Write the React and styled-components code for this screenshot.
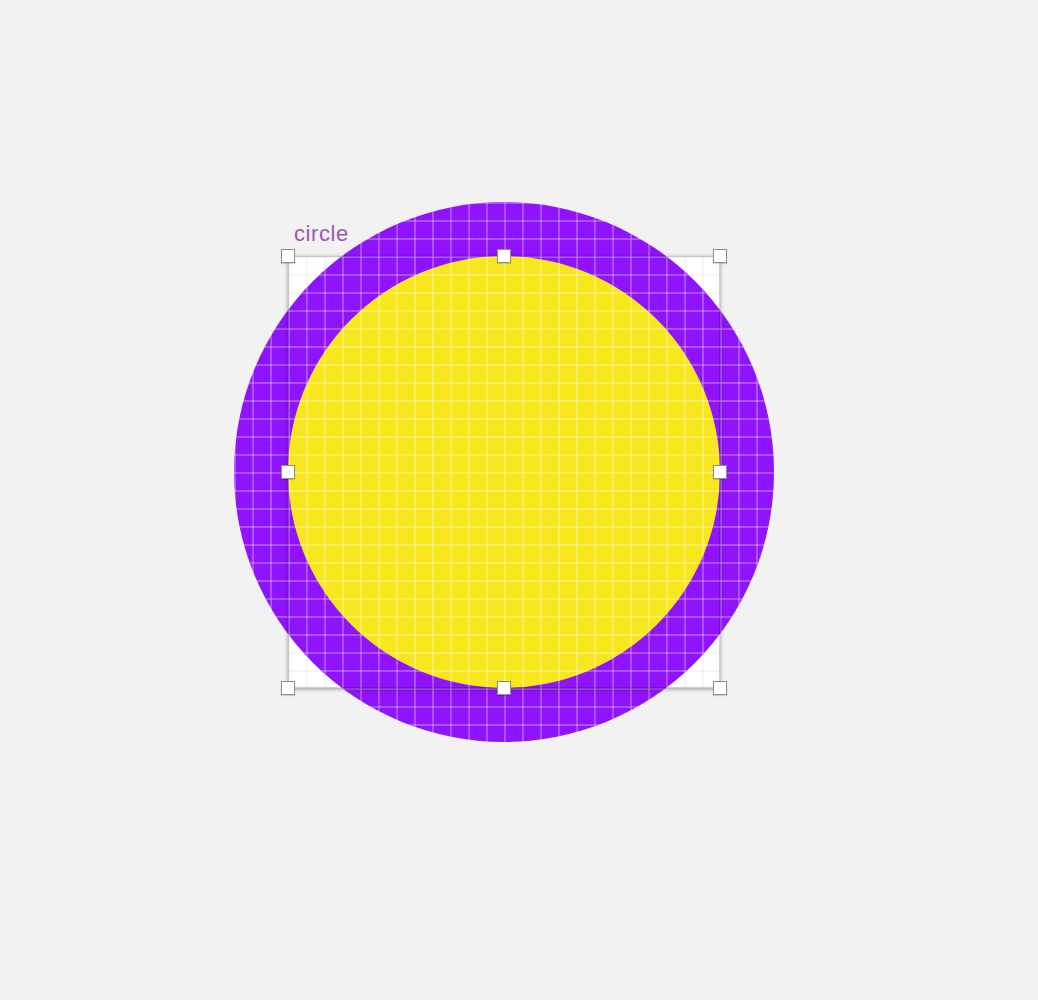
import React from "react";
import styled, { createGlobalStyle } from "styled-components";

const GlobalStyle = createGlobalStyle`
  html, body {
    margin: 0;
    padding: 0;
    background: #f2f2f2;
  }
  body {
    font-family: "Liberation Sans", Arial, sans-serif;
  }
`;

const gridLines = (color) => `
  linear-gradient(to right, ${color} 0, ${color} 2px, transparent 2px),
  linear-gradient(to bottom, ${color} 0, ${color} 2px, transparent 2px)
`;

const Canvas = styled.main`
  position: relative;
  width: 100%;
  height: 1000px;
  overflow: hidden;
  background: #f2f2f2;
`;

const Group = styled.div`
  position: absolute;
  left: 234px;
  top: 202px;
  width: 540px;
  height: 540px;
`;

const ElementBox = styled.div`
  position: absolute;
  left: 54px;
  top: 54px;
  width: 432px;
  height: 432px;
  background-color: #ffffff;
  background-image: ${gridLines("rgba(0,0,0,0.035)")};
  background-size: 18px 18px;
`;

const OuterRing = styled.div`
  position: absolute;
  left: 0;
  top: 0;
  width: 540px;
  height: 540px;
  border-radius: 50%;
  background-color: #9013fe;
  background-image: ${gridLines("rgba(255,255,255,0.26)")};
  background-size: 18px 18px;
`;

const InnerCircle = styled.div`
  position: absolute;
  left: 54px;
  top: 54px;
  width: 432px;
  height: 432px;
  border-radius: 50%;
  background-color: #f8e71c;
  background-image: ${gridLines("rgba(255,255,255,0.3)")};
  background-size: 18px 18px;
`;

const SelectionFrame = styled.div`
  position: absolute;
  left: 54px;
  top: 54px;
  width: 432px;
  height: 432px;
  box-sizing: border-box;
  border: 1px solid rgba(0, 0, 0, 0.18);
  box-shadow: 0 1px 4px rgba(0, 0, 0, 0.38);
  pointer-events: none;
`;

const Handle = styled.span`
  position: absolute;
  left: ${(p) => p.$x}px;
  top: ${(p) => p.$y}px;
  width: 14px;
  height: 14px;
  box-sizing: border-box;
  transform: translate(-50%, -50%);
  background: #ffffff;
  border: 1px solid #8e8e8e;
  box-shadow: 0 1px 1px rgba(0, 0, 0, 0.15);
`;

const Label = styled.span`
  position: absolute;
  left: 60px;
  top: 21px;
  font-family: "Liberation Sans", Arial, sans-serif;
  font-size: 22px;
  line-height: 22px;
  letter-spacing: 0.6px;
  color: #9b59b6;
  white-space: nowrap;
`;

const handles = [
  [54, 54],
  [270, 54],
  [486, 54],
  [54, 270],
  [486, 270],
  [54, 486],
  [270, 486],
  [486, 486],
];

export default function App() {
  return (
    <>
      <GlobalStyle />
      <Canvas>
        <Group>
          <ElementBox />
          <OuterRing />
          <InnerCircle />
          <SelectionFrame />
          {handles.map(([x, y]) => (
            <Handle key={`${x}-${y}`} $x={x} $y={y} />
          ))}
          <Label>circle</Label>
        </Group>
      </Canvas>
    </>
  );
}
